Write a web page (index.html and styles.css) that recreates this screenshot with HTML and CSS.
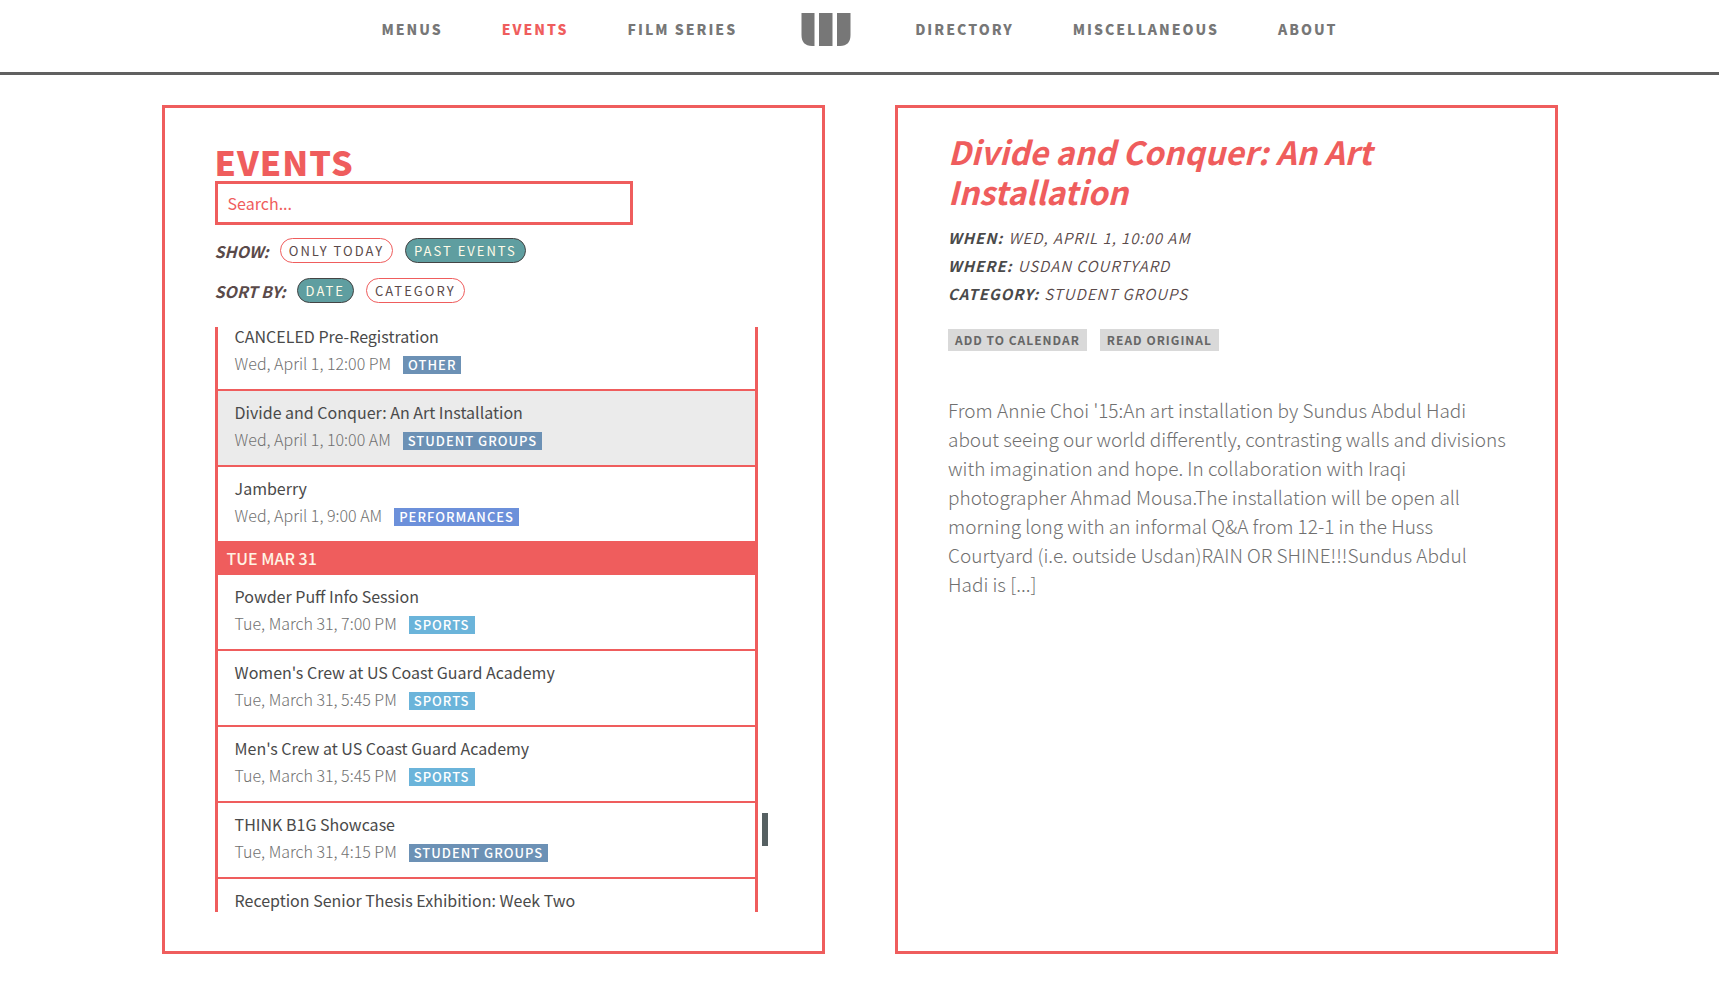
FILE: index.html
```html
<!DOCTYPE html>
<html lang="en">
<head>
<meta charset="utf-8">
<meta name="viewport" content="width=device-width, initial-scale=1">
<title>Events</title>
<link rel="stylesheet" href="styles.css">
</head>
<body>
<header class="site-header">
  <nav class="nav" aria-label="Main">
    <a class="nav-link" href="#menus">MENUS</a>
    <a class="nav-link active" href="#events">EVENTS</a>
    <a class="nav-link" href="#film">FILM SERIES</a>
    <a class="logo" href="#home" aria-label="Home">
      <svg width="50" height="33" viewBox="0 0 50 33" fill="#777" aria-hidden="true">
        <path d="M0.500 0H13.500V33H11C4 33 0.500 29 0.500 22Z"/>
        <path d="M18 0H31.500V33H18Z"/>
        <path d="M36 0H49.500V22C49.500 29 46 33 39 33H36Z"/>
      </svg>
    </a>
    <a class="nav-link" href="#directory">DIRECTORY</a>
    <a class="nav-link" href="#misc">MISCELLANEOUS</a>
    <a class="nav-link" href="#about">ABOUT</a>
  </nav>
</header>
<main class="columns">
  <section class="panel list-panel">
    <h1 class="page-title">EVENTS</h1>
    <input class="search" type="text" placeholder="Search..." aria-label="Search events">
    <div class="filter" role="group" aria-labelledby="show-label">
      <span class="filter-label" id="show-label">SHOW:</span>
      <button class="pill" type="button">ONLY TODAY</button>
      <button class="pill on" type="button">PAST EVENTS</button>
    </div>
    <div class="filter" role="group" aria-labelledby="sort-label">
      <span class="filter-label" id="sort-label">SORT BY:</span>
      <button class="pill on" type="button">DATE</button>
      <button class="pill" type="button">CATEGORY</button>
    </div>
    <div class="scroller">
      <div class="viewport">
        <ul class="events">
          <li class="event"><h3 class="event-name">CANCELED Pre-Registration</h3><p class="event-info"><span class="event-date">Wed, April 1, 12:00 PM</span><span class="tag">OTHER</span></p></li>
          <li class="event selected"><h3 class="event-name">Divide and Conquer: An Art Installation</h3><p class="event-info"><span class="event-date">Wed, April 1, 10:00 AM</span><span class="tag">STUDENT GROUPS</span></p></li>
          <li class="event"><h3 class="event-name">Jamberry</h3><p class="event-info"><span class="event-date">Wed, April 1, 9:00 AM</span><span class="tag performances">PERFORMANCES</span></p></li>
          <li class="day">TUE MAR 31</li>
          <li class="event"><h3 class="event-name">Powder Puff Info Session</h3><p class="event-info"><span class="event-date">Tue, March 31, 7:00 PM</span><span class="tag sports">SPORTS</span></p></li>
          <li class="event"><h3 class="event-name">Women's Crew at US Coast Guard Academy</h3><p class="event-info"><span class="event-date">Tue, March 31, 5:45 PM</span><span class="tag sports">SPORTS</span></p></li>
          <li class="event"><h3 class="event-name">Men's Crew at US Coast Guard Academy</h3><p class="event-info"><span class="event-date">Tue, March 31, 5:45 PM</span><span class="tag sports">SPORTS</span></p></li>
          <li class="event"><h3 class="event-name">THINK B1G Showcase</h3><p class="event-info"><span class="event-date">Tue, March 31, 4:15 PM</span><span class="tag">STUDENT GROUPS</span></p></li>
          <li class="event"><h3 class="event-name">Reception Senior Thesis Exhibition: Week Two</h3></li>
        </ul>
      </div>
      <div class="thumb"></div>
    </div>
  </section>
  <article class="panel detail-panel">
    <h2 class="detail-title">Divide and Conquer: An Art Installation</h2>
    <dl class="facts">
      <div class="fact"><dt>WHEN:</dt><dd>WED, APRIL 1, 10:00 AM</dd></div>
      <div class="fact"><dt>WHERE:</dt><dd>USDAN COURTYARD</dd></div>
      <div class="fact"><dt>CATEGORY:</dt><dd>STUDENT GROUPS</dd></div>
    </dl>
    <div class="actions">
      <button class="action" type="button">ADD TO CALENDAR</button>
      <a class="action" href="#original">READ ORIGINAL</a>
    </div>
    <p class="description">From Annie Choi '15:An art installation by Sundus Abdul Hadi about seeing our world differently, contrasting walls and divisions with imagination and hope. In collaboration with Iraqi photographer Ahmad Mousa.The installation will be open all morning long with an informal Q&amp;A from 12-1 in the Huss Courtyard (i.e. outside Usdan)RAIN OR SHINE!!!Sundus Abdul Hadi is [...]</p>
  </article>
</main>
</body>
</html>
```
FILE: styles.css
```css
:root {
  --coral: #ef5d5d;
  --ink: #4a4a4a;
  --muted: #777;
  --teal: #5f9ea0;
}

* {
  box-sizing: border-box;
}

body,
h1,
h2,
h3,
p,
ul,
dl,
dd {
  margin: 0;
  padding: 0;
}

body {
  background: #fff;
  color: var(--ink);
  font-family: "Source Sans Pro", "Noto Sans CJK SC", "Noto Sans", sans-serif;
  font-size: 16px;
}

button,
input {
  font-family: inherit;
}

.site-header {
  border-bottom: 3px solid #606060;
}

.nav {
  display: flex;
  justify-content: center;
  align-items: center;
  gap: 59px;
  height: 72px;
  padding-bottom: 14px;
}

.nav-link {
  color: var(--muted);
  font-size: 14px;
  font-weight: 900;
  letter-spacing: 2px;
  text-decoration: none;
}

.nav-link.active {
  color: var(--coral);
}

.logo {
  display: flex;
  padding: 0 5px;
}

.columns {
  display: grid;
  grid-template-columns: 1fr 1fr;
  gap: 70px;
  min-height: 849px;
  margin: 30px 0 28px;
  padding: 0 9.34% 0 9.4%;
}

.panel {
  border: 3px solid var(--coral);
  padding: 0 50px;
}

.list-panel {
  display: flex;
  flex-direction: column;
  padding-top: 34px;
  padding-bottom: 39px;
}

.page-title {
  color: var(--coral);
  font-size: 34px;
  font-weight: 900;
  letter-spacing: 1px;
  line-height: 39px;
}

.search {
  width: 75%;
  height: 44px;
  margin-bottom: 13px;
  padding: 0 10px;
  border: 3px solid var(--coral);
  background: #fff;
  color: var(--coral);
  font-size: 16px;
}

.search::placeholder {
  color: var(--coral);
  opacity: 1;
}

.filter {
  display: flex;
  align-items: center;
  gap: 12px;
  height: 25px;
  margin-bottom: 15px;
}

.filter-label {
  margin-right: -1px;
  color: #5a4a4a;
  font-size: 16px;
  font-style: italic;
  font-weight: 700;
  line-height: 22px;
}

.pill {
  height: 25px;
  padding: 0 8px;
  border: 1px solid var(--coral);
  border-radius: 13px;
  background: #fff;
  color: #5a4a4a;
  font-size: 13px;
  letter-spacing: 2px;
  line-height: 22px;
}

.pill.on {
  border-color: #444;
  background: var(--teal);
  color: #fffbe8;
}

.scroller {
  position: relative;
  flex: 1;
  margin-top: 9px;
  padding-right: 14px;
}

.viewport {
  height: 585px;
  overflow: hidden;
  border: solid var(--coral);
  border-width: 0 3px;
}

.events {
  margin-top: -12px;
  list-style: none;
}

.event {
  height: 76px;
  padding: 8px 17px 0;
  border-bottom: 2px solid var(--coral);
}

.event.selected {
  background: #ebebeb;
}

.event-name {
  font-size: 16px;
  font-weight: 400;
  line-height: 27px;
}

.event-info {
  display: flex;
  align-items: center;
  gap: 12px;
  height: 27px;
}

.event-date {
  color: #707070;
  font-size: 16px;
  font-weight: 300;
  line-height: 27px;
}

.tag {
  margin-top: 3px;
  padding: 0 5px;
  background: #6c91b5;
  color: #fff;
  font-size: 13px;
  font-weight: 500;
  letter-spacing: 1px;
  line-height: 18px;
}

.tag.performances {
  background: #6c90da;
}

.tag.sports {
  background: #6bb4da;
}

.day {
  padding: 0 9px 2px;
  background: var(--coral);
  color: #fff3e4;
  font-size: 16px;
  font-weight: 500;
  line-height: 30px;
}

.thumb {
  position: absolute;
  top: 486px;
  right: 4px;
  width: 6px;
  height: 33px;
  background: #566062;
}

.detail-panel {
  padding-top: 23px;
}

.detail-title {
  margin-bottom: 13px;
  color: var(--coral);
  font-size: 32px;
  font-style: italic;
  font-weight: 700;
  line-height: 40px;
}

.fact {
  display: flex;
  gap: 5px;
  font-size: 15px;
  font-style: italic;
  letter-spacing: 1px;
  line-height: 28px;
}

.fact dt {
  font-weight: 700;
}

.fact dd {
  color: #5a4a4a;
  font-weight: 350;
}

.actions {
  display: flex;
  gap: 13px;
  margin: 21px 0 44px;
}

.action {
  padding: 0 7px;
  border: 0;
  background: #d9d9d9;
  color: #666;
  font-size: 12px;
  font-weight: 700;
  letter-spacing: 1px;
  line-height: 22px;
  text-decoration: none;
}

.description {
  margin-right: -5px;
  color: #707070;
  font-size: 19px;
  font-weight: 300;
  line-height: 29px;
}
```
